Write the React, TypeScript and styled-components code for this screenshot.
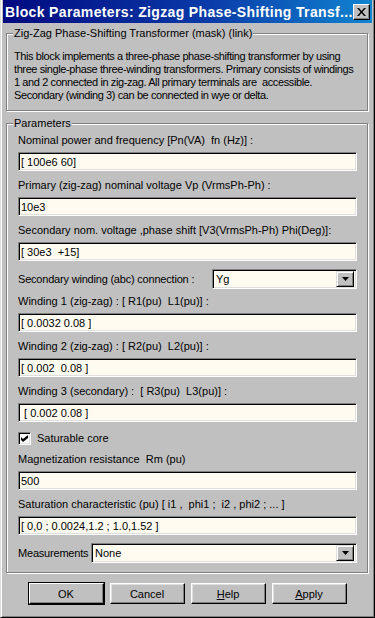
import styled, { createGlobalStyle } from 'styled-components';

const GlobalStyle = createGlobalStyle`
  html, body {
    margin: 0;
    padding: 0;
    background: #c0c0c0;
  }
  body {
    font-family: "Liberation Sans", Arial, sans-serif;
    font-size: 11px;
    color: #000;
  }
`;

const Window = styled.div`
  width: 375px;
  height: 618px;
  box-sizing: border-box;
  background: #c0c0c0;
  border-left: 1px solid #dfdfdf;
  border-right: 1px solid #000;
  border-bottom: 1px solid #000;
  box-shadow: inset 1px 0 0 #fff, inset -1px -1px 0 #808080;
  padding: 0 2px 2px 2px;
  display: flex;
  flex-direction: column;
  overflow: hidden;
`;

const TitleBar = styled.div`
  height: 23px;
  flex-shrink: 0;
  display: flex;
  align-items: center;
  justify-content: space-between;
  padding: 0 2px 0 2px;
  background: linear-gradient(90deg, #000a80 0%, #0a3aa8 55%, #1084d0 100%);
`;

const TitleText = styled.span`
  color: #fff;
  font-weight: bold;
  font-size: 14px;
  white-space: nowrap;
  letter-spacing: 0.35px;
`;

const CloseButton = styled.div`
  width: 15px;
  height: 14px;
  display: flex;
  align-items: center;
  justify-content: center;
  background: #c0c0c0;
  border-top: 1px solid #fff;
  border-left: 1px solid #fff;
  border-right: 1px solid #000;
  border-bottom: 1px solid #000;
  box-shadow: inset -1px -1px 0 #808080;
`;

const Content = styled.div`
  flex: 1;
  display: flex;
  flex-direction: column;
  padding: 10px 4px 0 3px;
`;

const GroupBox = styled.div<{ $gap?: number }>`
  position: relative;
  border: 1px solid #808080;
  box-shadow: inset 1px 1px 0 #fff, 1px 1px 0 #fff;
  margin-top: ${(p) => p.$gap ?? 0}px;
`;

const Legend = styled.span`
  position: absolute;
  top: -7px;
  left: 6px;
  padding: 0 1px;
  line-height: 13px;
  background: #c0c0c0;
  white-space: pre;
`;

const Description = styled.p`
  margin: 0;
  padding: 16px 2px 8px 7px;
  line-height: 13px;
  letter-spacing: -0.4px;
  white-space: pre;
  overflow: hidden;
`;

const ParamList = styled.div`
  display: flex;
  flex-direction: column;
  padding: 9px 10px 9px 11px;
`;

const FieldLabel = styled.div<{ $gap?: number }>`
  height: 14px;
  line-height: 14px;
  white-space: pre;
  margin-top: ${(p) => p.$gap ?? 7}px;
`;

const sunken = `
  box-sizing: border-box;
  border-top: 1px solid #808080;
  border-left: 1px solid #808080;
  border-right: 1px solid #fff;
  border-bottom: 1px solid #fff;
  box-shadow: inset 1px 1px 0 #000, inset -1px -1px 0 #dfdfdf;
  background: #fffbf0;
`;

const TextInput = styled.input`
  ${sunken}
  display: block;
  width: 100%;
  height: 19px;
  margin: 5px 0 0 0;
  padding: 0 0 0 2px;
  font-family: "Liberation Sans", Arial, sans-serif;
  font-size: 11px;
  color: #000;
  outline: none;
  white-space: pre;
`;

const SelectRow = styled.div<{ $gap: number; $labelWidth: number }>`
  display: grid;
  grid-template-columns: ${(p) => p.$labelWidth}px 1fr;
  align-items: center;
  margin-top: ${(p) => p.$gap}px;
`;

const SelectLabel = styled.span`
  white-space: pre;
  letter-spacing: -0.2px;
`;

const SelectBox = styled.div`
  ${sunken}
  height: 20px;
  display: flex;
  align-items: center;
  justify-content: space-between;
  padding: 2px 2px 2px 3px;
`;

const SelectValue = styled.span`
  font-size: 11px;
`;

const DropButton = styled.div`
  box-sizing: border-box;
  width: 18px;
  height: 16px;
  display: flex;
  align-items: center;
  justify-content: center;
  background: #c0c0c0;
  border-top: 1px solid #dfdfdf;
  border-left: 1px solid #dfdfdf;
  border-right: 1px solid #000;
  border-bottom: 1px solid #000;
  box-shadow: inset 1px 1px 0 #fff, inset -1px -1px 0 #808080;
`;

const CheckRow = styled.label`
  display: flex;
  align-items: center;
  gap: 6px;
  height: 14px;
  margin-top: 9px;
`;

const CheckBox = styled.span`
  ${sunken}
  width: 13px;
  height: 13px;
  display: flex;
  align-items: center;
  justify-content: center;
  background: #fff;
`;

const ButtonRow = styled.div`
  display: flex;
  justify-content: center;
  gap: 6px;
  margin-top: 10px;
  padding-left: 1px;
`;

const Button = styled.div<{ $default?: boolean }>`
  box-sizing: border-box;
  width: 75px;
  height: 21px;
  display: flex;
  align-items: center;
  justify-content: center;
  font-size: 11px;
  background: #c0c0c0;
  border-top: 1px solid #fff;
  border-left: 1px solid #fff;
  border-right: 1px solid #000;
  border-bottom: 1px solid #000;
  box-shadow: ${(p) =>
    p.$default
      ? 'inset -1px -1px 0 #808080, 0 0 0 1px #000'
      : 'inset -1px -1px 0 #808080, inset 1px 1px 0 #dfdfdf'};
  u {
    text-decoration: underline;
  }
`;

function CloseIcon() {
  return (
    <svg width="9" height="8" viewBox="0 0 9 8">
      <path d="M0 0h2l2.5 3 2.5-3h2L5.5 4 9 8H7L4.5 5 2 8H0l3.5-4z" fill="#000" />
    </svg>
  );
}

function DownArrow() {
  return (
    <svg width="7" height="4" viewBox="0 0 7 4">
      <path d="M0 0h7L3.5 4z" fill="#000" />
    </svg>
  );
}

function CheckMark() {
  return (
    <svg width="7" height="7" viewBox="0 0 7 7">
      <path d="M0 2l2 2 5-4v3L2 7 0 5z" fill="#000" />
    </svg>
  );
}

type Field = { label: string; value: string };

const firstFields: Field[] = [
  { label: 'Nominal power and frequency [Pn(VA)  fn (Hz)] :', value: '[ 100e6 60]' },
  { label: 'Primary (zig-zag) nominal voltage Vp (VrmsPh-Ph) :', value: '10e3' },
  { label: 'Secondary nom. voltage ,phase shift [V3(VrmsPh-Ph) Phi(Deg)]:', value: '[ 30e3  +15]' },
];

const windingFields: Field[] = [
  { label: 'Winding 1 (zig-zag) : [ R1(pu)  L1(pu)] :', value: '[ 0.0032 0.08 ]' },
  { label: 'Winding 2 (zig-zag) : [ R2(pu)  L2(pu)] :', value: '[ 0.002  0.08 ]' },
  { label: 'Winding 3 (secondary) :  [ R3(pu)  L3(pu)] :', value: ' [ 0.002 0.08 ]' },
];

const coreFields: Field[] = [
  { label: 'Magnetization resistance  Rm (pu)', value: '500' },
  { label: 'Saturation characteristic (pu) [ i1 ,  phi1 ;  i2 , phi2 ; ... ]', value: '[ 0,0 ; 0.0024,1.2 ; 1.0,1.52 ]' },
];

function renderFields(fields: Field[], firstGap?: number) {
  return fields.map((f, i) => [
    <FieldLabel key={f.label} $gap={i === 0 ? firstGap : undefined}>
      {f.label}
    </FieldLabel>,
    <TextInput key={f.label + '-v'} readOnly value={f.value} />,
  ]);
}

export default function App() {
  return (
    <>
      <GlobalStyle />
      <Window>
        <TitleBar>
          <TitleText>Block Parameters: Zigzag Phase-Shifting Transf...</TitleText>
          <CloseButton>
            <CloseIcon />
          </CloseButton>
        </TitleBar>
        <Content>
          <GroupBox>
            <Legend>Zig-Zag Phase-Shifting Transformer (mask) (link)</Legend>
            <Description>
              {'This block implements a three-phase phase-shifting transformer by using\nthree single-phase three-winding transformers. Primary consists of windings\n1 and 2 connected in zig-zag. All primary terminals are  accessible.\nSecondary (winding 3) can be connected in wye or delta.'}
            </Description>
          </GroupBox>
          <GroupBox $gap={12}>
            <Legend>Parameters</Legend>
            <ParamList>
              {renderFields(firstFields, 0)}
              <SelectRow $gap={8} $labelWidth={194}>
                <SelectLabel>Secondary winding (abc) connection :</SelectLabel>
                <SelectBox>
                  <SelectValue>Yg</SelectValue>
                  <DropButton>
                    <DownArrow />
                  </DropButton>
                </SelectBox>
              </SelectRow>
              {renderFields(windingFields, 5)}
              <CheckRow>
                <CheckBox>
                  <CheckMark />
                </CheckBox>
                <span>Saturable core</span>
              </CheckRow>
              {renderFields(coreFields)}
              <SelectRow $gap={8} $labelWidth={73}>
                <SelectLabel>Measurements</SelectLabel>
                <SelectBox>
                  <SelectValue>None</SelectValue>
                  <DropButton>
                    <DownArrow />
                  </DropButton>
                </SelectBox>
              </SelectRow>
            </ParamList>
          </GroupBox>
          <ButtonRow>
            <Button $default>OK</Button>
            <Button>Cancel</Button>
            <Button>
              <span>
                <u>H</u>elp
              </span>
            </Button>
            <Button>
              <span>
                <u>A</u>pply
              </span>
            </Button>
          </ButtonRow>
        </Content>
      </Window>
    </>
  );
}
